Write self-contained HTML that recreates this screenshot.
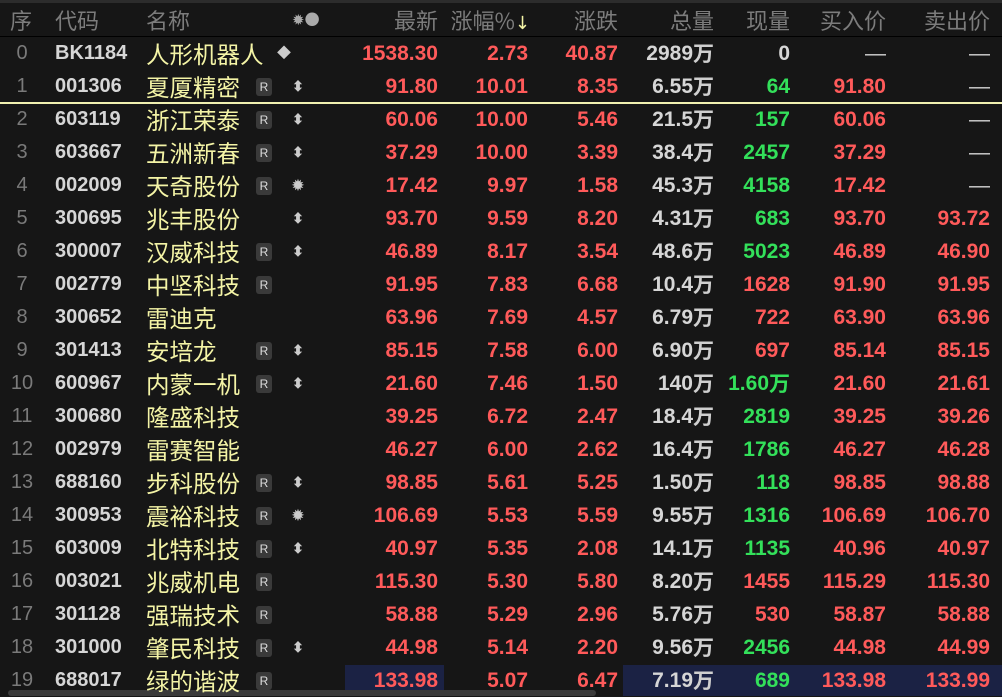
<!DOCTYPE html>
<html><head><meta charset="utf-8"><style>
*{margin:0;padding:0;box-sizing:border-box}
body{width:1002px;height:696px;background:#161616;overflow:hidden;position:relative;font-family:"Liberation Sans","Noto Sans CJK SC",sans-serif}
.top{position:absolute;left:0;top:0;width:1002px;height:3px;background:#2c2c2c}
.hd{position:absolute;top:4px;height:33px;border-bottom:1px solid #000;width:1002px}
.hd span{position:absolute;top:1px;font-size:22px;line-height:30px;color:#7c7c7c;font-family:"Noto Sans CJK SC",sans-serif;white-space:nowrap}
.row{position:absolute;left:0;width:1002px;height:33px}
.row span{position:absolute;top:3px;height:27px;font-size:21px;font-weight:bold;white-space:nowrap;line-height:27px;overflow:visible}
.i{color:#7a7a7a;font-weight:normal!important;width:40px;text-align:center;left:2px;font-size:20px!important}
.c{color:#d6d6d6;left:55px;font-size:20px!important}
.n{color:#f4f4a6;left:146px;font-family:"Noto Sans CJK SC",sans-serif;font-weight:normal!important;font-size:23.5px!important}
.r{color:#ff5a5a}.g{color:#33e05a}.w{color:#d6d6d6}
.R{left:256px;top:8px!important;width:16px;height:18px!important;background:#3a3a3a;border-radius:3px;color:#ddd;font-size:12px!important;font-weight:normal!important;line-height:18px!important;text-align:center}
.ic{left:290px;color:#ccc;font-size:14px!important;width:16px;text-align:center}
.wan{position:static!important;display:inline-block;height:27px;line-height:27px;vertical-align:top;font-size:22px;color:#cfcfcf;font-weight:normal;font-family:"Noto Sans CJK SC",sans-serif}
.hl{position:absolute;background:#1b2244}
</style></head><body>
<div class="top"></div>
<div class="hd">
<span style="left:10px">序</span><span style="left:55px">代码</span><span style="left:146px">名称</span>
<span style="left:292px;font-size:15px;color:#aaa">✹●</span>
<span style="right:564px">最新</span><span style="right:472px">涨幅%<b style="color:#f4f4a6;font-weight:normal;font-size:18px;font-family:'DejaVu Sans',sans-serif">↓</b></span>
<span style="right:384px">涨跌</span><span style="right:288px">总量</span><span style="right:212px">现量</span>
<span style="right:116px">买入价</span><span style="right:12px">卖出价</span>
</div>
<div style="position:absolute;left:0;top:102px;width:1002px;height:2px;background:#f0f0b0"></div>
<div class="hl" style="left:345px;top:665px;width:99px;height:31px"></div>
<div class="hl" style="left:623px;top:665px;width:379px;height:31px"></div>
<div style="position:absolute;left:8px;top:690px;width:588px;height:6px;background:#3a3a3a;border-radius:3px"></div>
<div id="t"></div>
<script>
var d=[
["0","BK1184","人形机器人","","◆","1538.30","2.73","40.87","2989","0","—","—","w"],
["1","001306","夏厦精密","R","⬍","91.80","10.01","8.35","6.55","64","91.80","—","g"],
["2","603119","浙江荣泰","R","⬍","60.06","10.00","5.46","21.5","157","60.06","—","g"],
["3","603667","五洲新春","R","⬍","37.29","10.00","3.39","38.4","2457","37.29","—","g"],
["4","002009","天奇股份","R","✹","17.42","9.97","1.58","45.3","4158","17.42","—","g"],
["5","300695","兆丰股份","","⬍","93.70","9.59","8.20","4.31","683","93.70","93.72","g"],
["6","300007","汉威科技","R","⬍","46.89","8.17","3.54","48.6","5023","46.89","46.90","g"],
["7","002779","中坚科技","R","","91.95","7.83","6.68","10.4","1628","91.90","91.95","r"],
["8","300652","雷迪克","","","63.96","7.69","4.57","6.79","722","63.90","63.96","r"],
["9","301413","安培龙","R","⬍","85.15","7.58","6.00","6.90","697","85.14","85.15","r"],
["10","600967","内蒙一机","R","⬍","21.60","7.46","1.50","140","1.60万","21.60","21.61","g"],
["11","300680","隆盛科技","","","39.25","6.72","2.47","18.4","2819","39.25","39.26","g"],
["12","002979","雷赛智能","","","46.27","6.00","2.62","16.4","1786","46.27","46.28","g"],
["13","688160","步科股份","R","⬍","98.85","5.61","5.25","1.50","118","98.85","98.88","g"],
["14","300953","震裕科技","R","✹","106.69","5.53","5.59","9.55","1316","106.69","106.70","g"],
["15","603009","北特科技","R","⬍","40.97","5.35","2.08","14.1","1135","40.96","40.97","g"],
["16","003021","兆威机电","R","","115.30","5.30","5.80","8.20","1455","115.29","115.30","r"],
["17","301128","强瑞技术","R","","58.88","5.29","2.96","5.76","530","58.87","58.88","r"],
["18","301000","肇民科技","R","⬍","44.98","5.14","2.20","9.56","2456","44.98","44.99","g"],
["19","688017","绿的谐波","R","","133.98","5.07","6.47","7.19","689","133.98","133.99","g"]];
var h="";
d.forEach(function(r,k){
var y=37+k*33;
var dash=function(v,right){return v=="—"?'<span class="w" style="right:'+right+'px;font-weight:normal">—</span>':'<span class="r" style="right:'+right+'px">'+v+'</span>';};
h+='<div class="row" style="top:'+y+'px">'+
'<span class="i">'+r[0]+'</span><span class="c">'+r[1]+'</span><span class="n">'+r[2]+'</span>'+
(r[3]?'<span class="R">R</span>':'')+
(r[4]?'<span class="ic"'+(r[4]=="◆"?' style="left:276px"':'')+'>'+r[4]+'</span>':'')+
'<span class="r" style="right:564px">'+r[5]+'</span>'+
'<span class="r" style="right:474px">'+r[6]+'</span>'+
'<span class="r" style="right:384px">'+r[7]+'</span>'+
'<span class="w" style="right:288px">'+r[8]+'<span class="wan">万</span></span>'+
'<span class="'+r[12]+'" style="right:212px">'+r[9].replace("万",'<span class="wan" style="color:#33e05a">万</span>')+'</span>'+
dash(r[10],116)+dash(r[11],12)+'</div>';
});
document.getElementById("t").innerHTML=h;
</script>
</body></html>
